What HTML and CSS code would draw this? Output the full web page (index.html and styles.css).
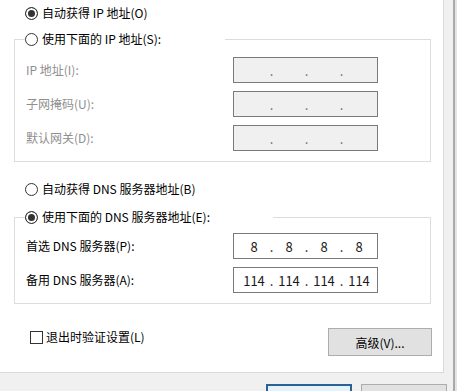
FILE: index.html
```html
<!DOCTYPE html>
<html lang="zh-CN">
<head>
  <meta charset="UTF-8" />
  <meta name="viewport" content="width=device-width, initial-scale=1.0" />
  <title>Internet 协议版本 4 (TCP/IPv4) 属性</title>
  <link rel="stylesheet" href="styles.css">
</head>
<body>
  <div class="window">
    <div class="main">
      <div class="panel">
        <label class="option top-option"><span class="radio checked"></span>自动获得 IP 地址(O)</label>

        <div class="group ip-group">
          <label class="option legend ip-legend"><span class="radio"></span>使用下面的 IP 地址(S):</label>
          <div class="fields">
            <span class="field-label disabled">IP 地址(I):</span>
            <span class="ip-box disabled">
              <span class="octet"></span><span class="dot">.</span><span class="octet"></span><span class="dot">.</span><span class="octet"></span><span class="dot">.</span><span class="octet"></span>
            </span>

            <span class="field-label disabled">子网掩码(U):</span>
            <span class="ip-box disabled">
              <span class="octet"></span><span class="dot">.</span><span class="octet"></span><span class="dot">.</span><span class="octet"></span><span class="dot">.</span><span class="octet"></span>
            </span>

            <span class="field-label disabled">默认网关(D):</span>
            <span class="ip-box disabled">
              <span class="octet"></span><span class="dot">.</span><span class="octet"></span><span class="dot">.</span><span class="octet"></span><span class="dot">.</span><span class="octet"></span>
            </span>
          </div>
        </div>

        <label class="option auto-dns"><span class="radio"></span>自动获得 DNS 服务器地址(B)</label>

        <div class="group dns-group">
          <label class="option legend dns-legend"><span class="radio checked"></span>使用下面的 DNS 服务器地址(E):</label>
          <div class="fields">
            <span class="field-label">首选 DNS 服务器(P):</span>
            <span class="ip-box">
              <span class="octet">8</span><span class="dot">.</span><span class="octet">8</span><span class="dot">.</span><span class="octet">8</span><span class="dot">.</span><span class="octet">8</span>
            </span>

            <span class="field-label">备用 DNS 服务器(A):</span>
            <span class="ip-box">
              <span class="octet">114</span><span class="dot">.</span><span class="octet">114</span><span class="dot">.</span><span class="octet">114</span><span class="dot">.</span><span class="octet">114</span>
            </span>
          </div>
        </div>

        <div class="bottom-row">
          <label class="check"><span class="checkbox"></span>退出时验证设置(L)</label>
          <button class="btn advanced">高级(V)...</button>
        </div>
      </div>

      <!-- OK / Cancel, only their top edges are in view -->
      <div class="footer">
        <button class="btn primary" aria-label="确定"></button>
        <button class="btn" aria-label="取消"></button>
      </div>
    </div>
    <div class="edge"></div>
    <div class="outside"></div>
  </div>
</body>
</html>
```

FILE: styles.css
```css
html,
body {
  margin: 0;
  height: 100%;
  overflow: hidden;
}

body {
  font-family: "Noto Sans CJK SC", "Microsoft YaHei", sans-serif;
  font-size: 12px;
  color: #000;
  background: #f0f0f0;
}

.window {
  display: flex;
  height: 391px;
  overflow: hidden;
}

.main {
  width: 453px;
  flex-shrink: 0;
}

.edge {
  width: 2px;
  background: #a9a9a9;
}

.outside {
  flex: 1;
  background: #e4e4e4;
}

.panel {
  box-sizing: border-box;
  width: 444px;
  height: 373px;
  padding-top: 3px;
  background: #fff;
  border-right: 1px solid #d9d9d9;
  border-bottom: 1px solid #d9d9d9;
}

/* radio rows */
.option {
  display: flex;
  align-items: center;
  gap: 4px;
  height: 20px;
  line-height: 20px;
  white-space: nowrap;
}

.top-option,
.auto-dns {
  margin-left: 25px;
}

.auto-dns {
  margin-top: 17px;
}

.radio {
  box-sizing: border-box;
  width: 13px;
  height: 13px;
  border: 1px solid #333;
  border-radius: 50%;
  background: #fff;
  flex-shrink: 0;
}

.radio.checked {
  background: #333;
  box-shadow: inset 0 0 0 2px #fff;
}

/* group boxes */
.group {
  box-sizing: border-box;
  width: 417px;
  margin-left: 14px;
  border: 1px solid #dcdcdc;
  padding-bottom: 10px;
}

.ip-group {
  margin-top: 16px;
}

.dns-group {
  margin-top: 18px;
}

.legend {
  margin: -11px 0 0 10px;
  background: #fff;
}

.ip-legend {
  width: 200px;
}

.dns-legend {
  width: 248px;
}

.fields {
  display: grid;
  grid-template-columns: 207px 145px;
  grid-auto-rows: 26px;
  row-gap: 8px;
  align-items: center;
  padding-left: 11px;
}

.ip-group .fields {
  margin-top: 8px;
}

.dns-group .fields {
  margin-top: 6px;
}

.field-label {
  line-height: 20px;
}

.field-label.disabled {
  color: #8f8f8f;
}

.ip-box {
  box-sizing: border-box;
  height: 26px;
  display: flex;
  align-items: center;
  padding-left: 6px;
  border: 1px solid #7a7a7a;
  background: #fff;
  font-size: 13px;
  color: #1a1a1a;
}

.ip-box.disabled {
  background: #f0f0f0;
  color: #6d6d6d;
}

.octet {
  width: 28px;
  text-align: center;
}

.dot {
  width: 7px;
  text-align: center;
}

/* bottom part of the panel */
.bottom-row {
  display: flex;
  align-items: flex-start;
  margin-top: 24px;
  padding-left: 30px;
}

.check {
  display: flex;
  align-items: center;
  gap: 3px;
  height: 18px;
  line-height: 18px;
}

.checkbox {
  box-sizing: border-box;
  width: 13px;
  height: 13px;
  border: 1px solid #333;
  background: #fff;
}

.btn {
  box-sizing: border-box;
  font: inherit;
  color: #000;
  background: #e1e1e1;
  border: 1px solid #adadad;
  padding: 0;
  cursor: pointer;
}

.advanced {
  width: 104px;
  height: 28px;
  margin-left: auto;
  margin-right: 11px;
}

.footer {
  display: flex;
  justify-content: flex-end;
  gap: 9px;
  height: 18px;
  padding: 11px 6px 0 0;
  overflow: hidden;
}

.footer .btn {
  width: 86px;
  height: 23px;
  flex-shrink: 0;
}

.btn.primary {
  background: #e5f1fb;
  border: 2px solid #2a6296;
}
```
